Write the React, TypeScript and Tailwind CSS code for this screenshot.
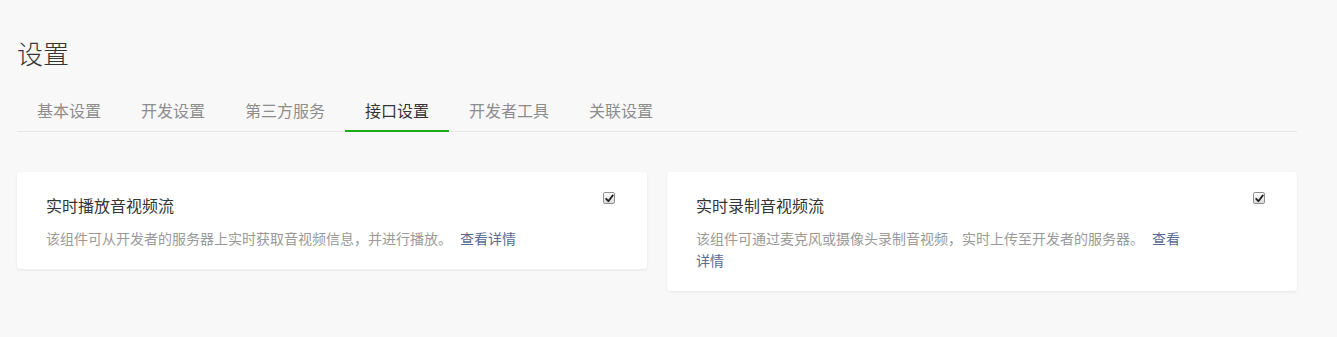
import { useState } from "react"

const tabs = ["基本设置", "开发设置", "第三方服务", "接口设置", "开发者工具", "关联设置"]

const items = [
  {
    title: "实时播放音视频流",
    desc: "该组件可从开发者的服务器上实时获取音视频信息，并进行播放。",
  },
  {
    title: "实时录制音视频流",
    desc: "该组件可通过麦克风或摄像头录制音视频，实时上传至开发者的服务器。",
  },
]

function Check() {
  return (
    <span className="flex h-[12px] w-[12px] shrink-0 items-center justify-center rounded-[2px] border border-[#8f8f8f] bg-gradient-to-b from-[#fdfdfd] to-[#dcdcdc]">
      <svg width="9" height="9" viewBox="0 0 9 9">
        <path d="M1.2 4.8 L3.4 7.2 L7.8 1.4" fill="none" stroke="#222" strokeWidth="1.8" strokeLinecap="round" strokeLinejoin="round" />
      </svg>
    </span>
  )
}

export default function App() {
  const [active, setActive] = useState(3)

  return (
    <div className="min-h-[337px] bg-[#f8f8f8] pl-[17px] pr-[40px] pt-[35px] font-['Noto_Sans_CJK_SC','Noto_Sans',sans-serif]">
      {/* Title */}
      <h1 className="text-[26px] font-light leading-[36px] text-[#353535]">设置</h1>

      {/* Tabs */}
      <div className="mt-[18px] flex border-b border-[#e7e7eb]">
        {tabs.map((t, i) => (
          <button
            key={t}
            onClick={() => setActive(i)}
            className={`-mb-px flex h-[43px] items-center border-b-2 px-[20px] text-[16px] ${
              active === i ? "border-[#1aad19] text-[#353535]" : "border-transparent text-[#8d8d8d]"
            }`}
          >
            {t}
          </button>
        ))}
      </div>

      {/* Cards */}
      <div className="mt-[40px] grid grid-cols-2 items-start gap-[20px]">
        {items.map((it) => (
          <div
            key={it.title}
            className="flex rounded-[3px] bg-white pb-[20px] pl-[29px] pr-[32px] pt-[20px] shadow-[0_1px_3px_rgba(0,0,0,0.08)]"
          >
            <div className="flex-1">
              <div className="mt-[1px] text-[16px] leading-[24px] text-[#353535]">{it.title}</div>
              <p className="mt-[10px] max-w-[490px] text-[14px] leading-[22px] text-[#9a9a9a]">
                {it.desc}
                <a className="ml-[8px] text-[#576b95]">查看详情</a>
              </p>
            </div>
            <Check />
          </div>
        ))}
      </div>
    </div>
  )
}
